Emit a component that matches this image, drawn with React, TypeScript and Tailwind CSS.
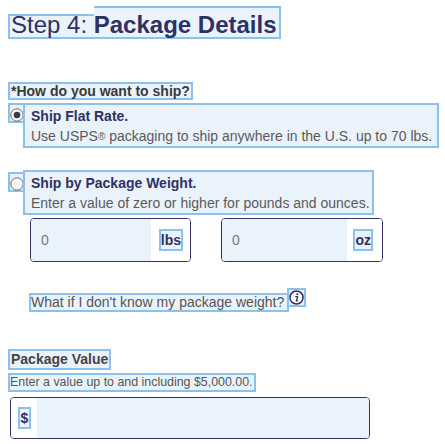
import React from 'react';

const hl = 'bg-[#eaf3fc] border-2 border-[#8cc0ee]';

const Radio: React.FC<{ checked?: boolean }> = ({ checked }) => (
  <svg width="14" height="14" viewBox="0 0 14 14">
    <circle cx="7" cy="7" r="6.2" fill="#f7f7f7" stroke="#6b6b6b" strokeWidth="1" />
    {checked && <circle cx="7" cy="7" r="3.3" fill="#3a3a4a" />}
  </svg>
);

const InfoIcon: React.FC = () => (
  <svg width="15" height="15" viewBox="0 0 16 16">
    <circle cx="8" cy="8" r="7" fill="white" stroke="#2f3063" strokeWidth="1.6" />
    <circle cx="8.9" cy="4.6" r="1.1" fill="#2f3063" />
    <path d="M7.2 7h2l-1.3 4.6h1.2" fill="none" stroke="#2f3063" strokeWidth="1.4" strokeLinecap="round" strokeLinejoin="round" />
  </svg>
);

const ShipOption: React.FC<{ title: string; desc: React.ReactNode; checked?: boolean; width: string; radioTop: string }> = ({
  title,
  desc,
  checked,
  width,
  radioTop,
}) => (
  <div className="flex items-start">
    <div className={`${radioTop} w-[16px] h-[20px] bg-[#eaf3fc] border-2 border-r-0 border-[#8cc0ee] flex items-start justify-start pt-[3px]`}>
      <Radio checked={checked} />
    </div>
    <div className={`${hl} ${width} -ml-[1px] pl-[6px] pt-[3px] pb-[2px]`}>
      <div className="text-[14px] leading-[16px] font-bold text-[#2f3063]">{title}</div>
      <div className="mt-[4px] text-[14px] leading-[16px] text-[#5a5a5a] whitespace-nowrap">{desc}</div>
    </div>
  </div>
);

const WeightInput: React.FC<{ unit: string; width: string; rightPad: string }> = ({ unit, width, rightPad }) => (
  <div className={`${width} h-[44px] flex border border-[#333366] rounded-[4px] overflow-hidden`}>
    <div className="flex-1 bg-[#eaf3fc] flex items-center pl-[10px] text-[14px] text-[#777]">0</div>
    <div className={`bg-white flex items-center ${rightPad}`}>
      <span className={`${hl} h-[22px] text-[14px] leading-[18px] font-bold text-[#2f3063]`}>{unit}</span>
    </div>
  </div>
);

export default function App() {
  return (
    <div className="w-[445px] h-[444px] bg-white overflow-hidden pl-2 pt-[6px] font-['Liberation_Sans',Arial,sans-serif]">
      {/* heading */}
      <div className="flex items-end w-fit h-[33px] text-[24px] text-[#2f3063]">
        <div className="h-[25px] flex items-end bg-[#eaf3fc] border-2 border-r-0 border-[#8cc0ee] pl-[1px]">
          <span className="leading-[24px] whitespace-pre">Step 4: </span>
        </div>
        <div className="h-[33px] flex items-end bg-[#eaf3fc] border-2 border-l-0 border-[#8cc0ee] pr-[2px]">
          <span className="leading-[24px] font-bold">Package Details</span>
        </div>
      </div>

      {/* question */}
      <div className={`${hl} w-fit mt-[43px] h-[18px] px-[1px] text-[14px] leading-[14px] font-bold text-[#3a3a3a]`}>
        *How do you want to ship?
      </div>

      <div className="mt-[3px]">
        <ShipOption
          checked
          width="w-[416px]"
          radioTop="mt-[0px]"
          title="Ship Flat Rate."
          desc={
            <>
              Use USPS<sup className="text-[10px] leading-none relative -top-[1px]">®</sup> packaging to ship anywhere in the U.S. up to 70 lbs.
            </>
          }
        />
      </div>

      <div className="mt-[22px]">
        <ShipOption
          width="w-[351px]"
          radioTop="mt-[2px]"
          title="Ship by Package Weight."
          desc="Enter a value of zero or higher for pounds and ounces."
        />
      </div>

      <div className="mt-[3px] ml-[22px] flex gap-[30px]">
        <WeightInput unit="lbs" width="w-[161px]" rightPad="pl-[8px] pr-[7px]" />
        <WeightInput unit="oz" width="w-[162px]" rightPad="pl-[6px] pr-[9px]" />
      </div>

      {/* help link */}
      <div className="mt-[31px] ml-[21px] flex items-start">
        <div className={`${hl} h-[19px] pr-[3px] text-[14px] leading-[15px] text-[#555] whitespace-nowrap`}>
          What if I don't know my package weight?
        </div>
        <div className={`${hl} -ml-[2px] -mt-[5px] w-[19px] h-[19px] flex items-center justify-center`}>
          <InfoIcon />
        </div>
      </div>

      {/* package value */}
      <div className={`${hl} w-fit mt-[37px] h-[21px] px-[1px] text-[14px] leading-[17px] font-bold text-[#444]`}>
        Package Value
      </div>
      <div className={`${hl} w-fit mt-[3px] h-[19px] pr-[1px] text-[12.4px] leading-[15px] text-[#555]`}>
        Enter a value up to and including $5,000.00.
      </div>
      <div className="mt-[5px] ml-[2px] w-[360px] h-[42px] flex border border-[#333366] rounded-[4px] overflow-hidden">
        <div className="w-[26px] bg-white flex items-center pl-[7px]">
          <span className={`${hl} h-[22px] w-[13px] flex items-center justify-center text-[14px] font-bold text-[#2f3063]`}>$</span>
        </div>
        <div className="flex-1 bg-[#eaf3fc]" />
      </div>
    </div>
  );
}
